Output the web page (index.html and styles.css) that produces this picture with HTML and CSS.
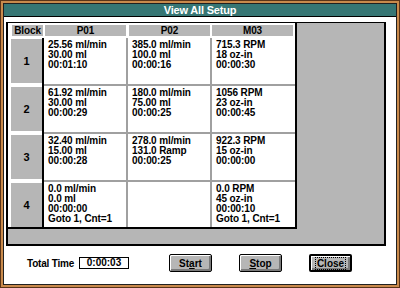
FILE: index.html
```html
<!DOCTYPE html>
<html lang="en">
<head>
  <meta charset="UTF-8">
  <title>View All Setup</title>
  <link rel="stylesheet" href="styles.css">
</head>
<body>
  <div class="frame">
    <div class="window">
      <div class="titlebar">View All Setup</div>
      <div class="client">
        <!-- Setup grid -->
        <div class="grid-box">
          <div class="sheet">
            <div class="hd hd-block"><span>Block</span></div>
            <div class="hd"><span>P01</span></div>
            <div class="hd"><span>P02</span></div>
            <div class="hd hd-last"><span>M03</span></div>

            <div class="blk"><span>1</span></div>
            <div class="cell">25.56 ml/min<br>30.00 ml<br>00:01:10</div>
            <div class="cell">385.0 ml/min<br>100.0 ml<br>00:00:16</div>
            <div class="cell last-col">715.3 RPM<br>18 oz-in<br>00:00:30</div>

            <div class="blk"><span>2</span></div>
            <div class="cell">61.92 ml/min<br>30.00 ml<br>00:00:29</div>
            <div class="cell">180.0 ml/min<br>75.00 ml<br>00:00:25</div>
            <div class="cell last-col">1056 RPM<br>23 oz-in<br>00:00:45</div>

            <div class="blk"><span>3</span></div>
            <div class="cell">32.40 ml/min<br>15.00 ml<br>00:00:28</div>
            <div class="cell">278.0 ml/min<br>131.0 Ramp<br>00:00:25</div>
            <div class="cell last-col">922.3 RPM<br>15 oz-in<br>00:00:00</div>

            <div class="blk blk-last"><span>4</span></div>
            <div class="cell last-row">0.0 ml/min<br>0.0 ml<br>00:00:00<br>Goto 1, Cnt=1</div>
            <div class="cell last-row"></div>
            <div class="cell last-row last-col">0.0 RPM<br>45 oz-in<br>00:00:10<br>Goto 1, Cnt=1</div>
          </div>
        </div>

        <!-- Footer -->
        <div class="footer">
          <span class="total-label">Total Time</span>
          <span class="total-box">0:00:03</span>
          <div class="buttons">
            <button class="btn">St<u>a</u>rt</button>
            <button class="btn"><u>S</u>top</button>
            <button class="btn btn-default"><span class="focus">Close</span></button>
          </div>
        </div>
      </div>
    </div>
  </div>
</body>
</html>
```

FILE: styles.css
```css
body {
  margin: 0;
  font-family: 'Liberation Sans', Arial, sans-serif;
  font-weight: bold;
  font-size: 10px;
  background: #fff;
}
.frame {
  width: 400px;
  height: 288px;
  box-sizing: border-box;
  border: 1px solid #5a3418;
  padding: 2px;
  background: #c98a4c;
}
.window {
  height: 100%;
  box-sizing: border-box;
  border: 1px solid #202020;
  display: flex;
  flex-direction: column;
  background: #fff;
}
.titlebar {
  height: 12px;
  line-height: 12px;
  background: #367674;
  border-bottom: 1px solid #000;
  color: #fff;
  font-size: 11px;
  letter-spacing: -0.2px;
  text-align: center;
}
.client {
  flex: 1;
  padding: 5px 0 0 2px;
}
.grid-box {
  width: 380px;
  height: 224px;
  box-sizing: border-box;
  border: 2px solid #000;
  border-top-width: 1px;
  background: #b6b6b6;
}
.sheet {
  width: 289px;
  height: 206px;
  box-sizing: border-box;
  border-right: 2px solid #000;
  border-bottom: 2px solid #000;
  background: #fff;
  display: grid;
  grid-template-columns: 36px 84px 84px 83px;
  grid-template-rows: 15px 48px 48px 48px 45px;
  letter-spacing: -0.1px;
}
.hd {
  padding: 2px 2px 2px 1px;
}
.hd span {
  display: block;
  height: 11px;
  line-height: 11px;
  background: #b6b6b6;
  text-align: center;
}
.hd-block {
  padding-left: 4px;
  padding-right: 1px;
}
.hd-last {
  padding-left: 0;
}
.blk {
  padding: 1px 0 3px 3px;
  border-right: 2px solid #000;
  font-size: 11px;
}
.blk span {
  display: flex;
  align-items: center;
  justify-content: center;
  height: 100%;
  background: #b6b6b6;
}
.blk-last {
  padding-bottom: 0;
}
.cell {
  padding: 2px 4px;
  line-height: 10px;
  border-right: 2px solid #a0a0a0;
  border-bottom: 2px solid #a0a0a0;
  white-space: nowrap;
  overflow: hidden;
}
.last-col {
  border-right: none;
}
.last-row {
  border-bottom: none;
}
.footer {
  display: flex;
  align-items: center;
  height: 18px;
  margin-top: 8px;
  padding-left: 21px;
}
.total-label {
  width: 46px;
  white-space: nowrap;
  letter-spacing: -0.2px;
}
.total-box {
  width: 50px;
  height: 12px;
  box-sizing: border-box;
  margin-left: 6px;
  border: 1px solid #000;
  line-height: 10px;
  text-align: center;
}
.buttons {
  display: flex;
  gap: 27px;
  margin-left: 40px;
}
.btn {
  width: 43px;
  height: 18px;
  box-sizing: border-box;
  padding: 0;
  border: 1px solid #000;
  border-radius: 2px;
  background: #b6b6b6;
  box-shadow: inset 1px 1px 0 #fff, inset -2px -2px 0 #7a7a7a;
  font-family: inherit;
  font-weight: bold;
  font-size: 10px;
  color: #000;
}
.btn-default {
  border-width: 2px;
}
.focus {
  outline: 1px dotted #000;
  outline-offset: 0;
  padding: 0 1px;
}
```
